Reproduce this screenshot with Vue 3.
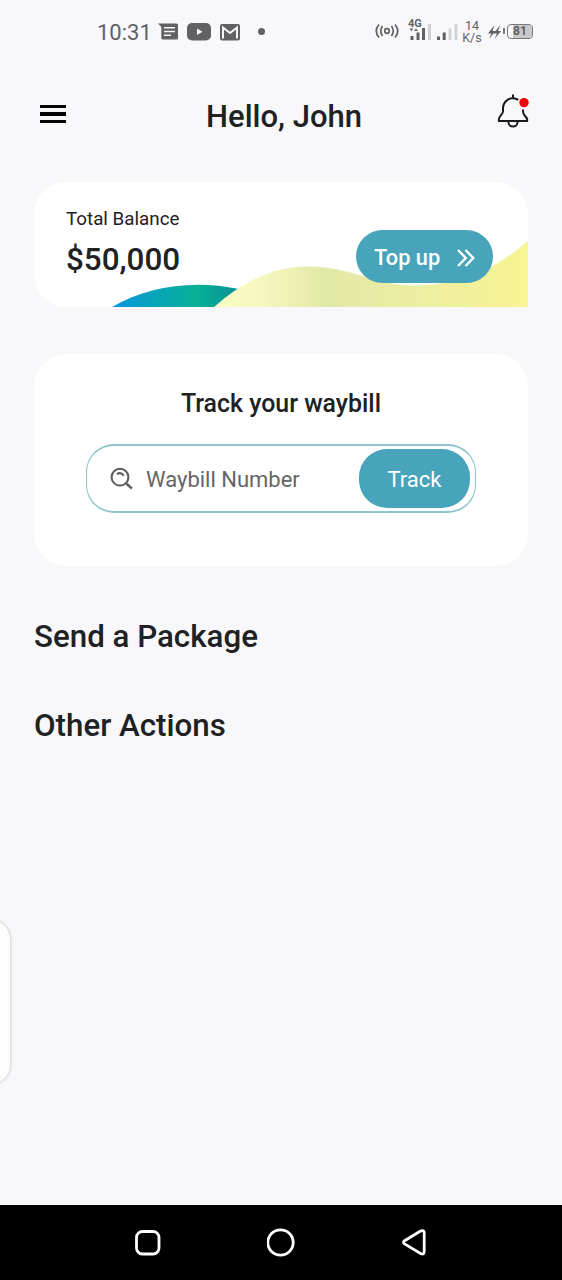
<script setup>
import { ref } from 'vue'

const waybill = ref('')
const battery = 81
</script>

<template>
  <div class="screen">
    <header class="status">
      <span class="clock">10:31</span>
      <svg class="msg" width="20" height="18" viewBox="0 0 20 18">
        <path d="M0 .5H18.500Q20 .5 20 2V15Q20 16.500 18.500 16.500H5Q3.300 16.500 3.300 15V4Z" fill="#616163" />
        <path d="M6 4.700H17M6 8.500H17M6 12.300H13" stroke="#f8f8fa" stroke-width="1.600" />
      </svg>
      <svg class="tube" width="24" height="18" viewBox="0 0 24 18">
        <rect width="24" height="17.500" rx="5" fill="#616163" />
        <path d="M10 5.500L15.500 8.700L10 12Z" fill="#f8f8fa" />
      </svg>
      <svg class="mail" width="20" height="17" viewBox="0 0 20 17">
        <rect width="20" height="16.500" rx="2" fill="#616163" />
        <path d="M3 14.500V3.500L10 9L17 3.500V14.500" fill="none" stroke="#f8f8fa" stroke-width="2" />
      </svg>
      <i class="dot"></i>
      <svg class="hotspot" width="24" height="16" viewBox="0 0 24 16" fill="none" stroke="#616163" stroke-width="1.700">
        <circle cx="12" cy="8" r="2.300" />
        <path d="M7.500 3Q4 8 7.500 13M16.500 3Q20 8 16.500 13M4 1.500Q-1.500 8 4 14.500M20 1.500Q25.500 8 20 14.500" />
      </svg>
      <div class="cell">
        <span class="gen">4G</span>
        <svg width="22" height="22" viewBox="0 0 22 22">
          <path d="M.5 9.500H4.500L2.500 12ZM5 12H9L7 9.500Z" fill="#616163" />
          <path d="M3 17V21M9 13.500V21M14.500 9V21" stroke="#616163" stroke-width="3" />
          <path d="M20.500 5V21" stroke="#d0d0d2" stroke-width="3" />
        </svg>
      </div>
      <svg class="signal" width="21" height="17" viewBox="0 0 21 17">
        <path d="M1.500 12.500V16M7.200 8.500V16" stroke="#616163" stroke-width="3" />
        <path d="M13 4.500V16M19 0V16" stroke="#d0d0d2" stroke-width="2.800" />
      </svg>
      <div class="rate"><span>14</span><span>K/s</span></div>
      <svg class="bolt" width="13" height="14" viewBox="0 0 13 14">
        <path d="M6.500 0L0 8.500H3.500L1 14L7.500 6H4.500ZM12.500 0L5.500 8.500H9L6.500 14L13 6H10Z" fill="#616163" />
      </svg>
      <i class="battery-tip"></i>
      <div class="battery"><b :style="{ width: battery + '%' }"></b><span>{{ battery }}</span></div>
    </header>

    <div class="topbar">
      <button class="menu" aria-label="Menu"><i></i><i></i><i></i></button>
      <h1>Hello, John</h1>
      <button class="bell" aria-label="Notifications">
        <svg width="32" height="34" viewBox="0 0 32 34" fill="none" stroke="#18191b" stroke-width="2" stroke-linejoin="round" stroke-linecap="round">
          <path d="M20.500 5.500C12.500 2 6 7.500 6 14.500V17.500C6 20 1.800 22.500 1.800 25.500V27H30.200V25.500C30.200 23 26 21.500 26 17.500V16.200" />
          <path d="M16 1.300V4" />
          <path d="M11.400 28C11.400 34 20.600 34 20.600 28" />
          <circle cx="27" cy="8.600" r="4.700" fill="#f40408" stroke="none" />
        </svg>
      </button>
    </div>

    <main>
      <section class="balance">
        <svg class="waves" width="494" height="125" viewBox="0 0 494 125">
          <defs>
            <linearGradient id="sea" x1="0" x2="1">
              <stop offset="0" stop-color="#0a97dc" />
              <stop offset=".35" stop-color="#08a5b8" />
              <stop offset=".67" stop-color="#06b194" />
              <stop offset="1" stop-color="#0b9099" />
            </linearGradient>
            <linearGradient id="sand" x1="0" x2="1">
              <stop offset="0" stop-color="#fbfcc5" />
              <stop offset=".14" stop-color="#f6f8c0" />
              <stop offset=".36" stop-color="#e2e8a6" />
              <stop offset=".62" stop-color="#ebeda3" />
              <stop offset="1" stop-color="#f8f493" />
            </linearGradient>
          </defs>
          <path d="M78 125C112 105 158 97 205 107L181 125Z" fill="url(#sea)" />
          <path d="M180 125C214 95 244 84.500 274 84.500C318 84.500 340 103.500 380 103.500C427 103.500 460 88 494 59V125Z" fill="url(#sand)" />
        </svg>
        <div class="amount">
          <p>Total Balance</p>
          <strong>$50,000</strong>
        </div>
        <button class="topup">
          <span>Top up</span>
          <svg width="18" height="18" viewBox="0 0 18 18" fill="none" stroke="#fff" stroke-width="2.400">
            <path d="M1 1L8.800 9L1 17M8.500 1L16.300 9L8.500 17" />
          </svg>
        </button>
      </section>

      <section class="track">
        <h2>Track your waybill</h2>
        <div class="search">
          <svg width="24" height="24" viewBox="0 0 24 24" fill="none" stroke="#5c5c5e" stroke-width="2">
            <circle cx="10" cy="10.200" r="8.400" />
            <path d="M16.300 16.500L21.800 21.500" stroke-width="2.400" />
            <path d="M6.800 7.200Q10.800 4.500 13.800 8.800" />
          </svg>
          <input v-model="waybill" placeholder="Waybill Number" />
          <button>Track</button>
        </div>
      </section>

      <h3>Send a Package</h3>
      <h3>Other Actions</h3>
    </main>

    <aside class="edge-panel"></aside>

    <nav>
      <svg width="26" height="26" viewBox="0 0 26 26"><rect x="1.500" y="1.500" width="22.500" height="22.500" rx="6" /></svg>
      <svg width="28" height="30" viewBox="0 0 28 30"><circle cx="13.500" cy="14.500" r="12.700" /></svg>
      <svg width="26" height="28" viewBox="0 0 26 28"><path d="M3.600 11.700L19.500 2.100Q23.200 .5 23.200 4.100V22.500Q23.200 26.100 19.500 24.500L3.600 14.900Q1.300 13.300 3.600 11.700Z" /></svg>
    </nav>
  </div>
</template>

<style>
body {
  background: #f8f8fa;
}
</style>

<style scoped>
* {
  box-sizing: border-box;
}
.screen {
  position: relative;
  display: flex;
  flex-direction: column;
  width: 562px;
  height: 1280px;
  overflow: hidden;
  background: #f8f8fa;
  color: #202123;
  font-family: Roboto, sans-serif;
}
h1, h2, h3, p {
  margin: 0;
  font-weight: 500;
  white-space: nowrap;
}
button {
  border: 0;
  padding: 0;
  background: none;
  font-family: inherit;
}
svg {
  display: block;
  flex: none;
}
.status {
  display: flex;
  align-items: center;
  height: 64px;
  padding-left: 97px;
  color: #616163;
}
.status > * {
  flex: none;
}
.clock {
  width: 61px;
  font-size: 22px;
}
.tube {
  margin-left: 9px;
}
.mail {
  margin-left: 9px;
}
.dot {
  width: 7px;
  height: 7px;
  margin-left: 18px;
  margin-bottom: 2px;
  border-radius: 50%;
  background: #616163;
}
.hotspot {
  margin-left: 110px;
  margin-bottom: 2px;
}
.cell {
  position: relative;
  margin-left: 10px;
  margin-bottom: 4px;
}
.gen {
  position: absolute;
  top: 0;
  left: -1px;
  font-size: 11px;
  font-weight: 700;
  line-height: 10px;
}
.signal {
  margin-left: 6px;
}
.rate {
  display: flex;
  flex-direction: column;
  align-items: center;
  width: 22px;
  margin-left: 3px;
  font-size: 12.500px;
  line-height: 12.500px;
}
.bolt {
  margin-left: 5px;
}
.battery-tip {
  width: 2px;
  height: 6px;
  margin-left: 2px;
  margin-bottom: 2px;
  background: #77777a;
}
.battery {
  position: relative;
  width: 26px;
  height: 15px;
  margin-left: 2px;
  margin-bottom: 2px;
  overflow: hidden;
  border: 1px solid #77777a;
  border-radius: 4px;
  font-size: 12px;
  font-weight: 700;
  line-height: 13px;
  text-align: center;
}
.battery b {
  position: absolute;
  right: 0;
  top: 0;
  bottom: 0;
  background: #c9c9cb;
}
.battery span {
  position: relative;
}
.topbar {
  display: flex;
  justify-content: space-between;
  align-items: center;
  height: 102px;
  padding: 0 33px 0 40px;
}
.menu {
  display: flex;
  flex-direction: column;
  gap: 4.500px;
  width: 26px;
  margin-bottom: 2px;
}
.menu i {
  height: 3.300px;
  background: #050506;
}
h1 {
  padding: 3px 0 0 5px;
  font-size: 31px;
  line-height: 36px;
}
.bell {
  margin-bottom: 8px;
}
main {
  flex: 1;
  padding: 16px 34px 0;
}
.balance {
  position: relative;
  display: flex;
  justify-content: space-between;
  height: 125px;
  padding: 26px 35px 0 32px;
  border-radius: 32px;
  background: #fff;
}
.waves {
  position: absolute;
  inset: 0;
}
.amount {
  position: relative;
}
.amount p {
  font-size: 18.800px;
  font-weight: 400;
  line-height: 23px;
}
.amount strong {
  display: block;
  margin-top: 10px;
  font-size: 31.400px;
  font-weight: 500;
  line-height: 38px;
}
.topup {
  position: relative;
  display: flex;
  justify-content: space-between;
  align-items: center;
  width: 137px;
  height: 53px;
  margin-top: 22px;
  padding: 2px 18px 0;
  border-radius: 27px;
  background: #47a4bb;
  color: #fff;
  font-size: 21.800px;
  font-weight: 500;
}
.track {
  display: flex;
  flex-direction: column;
  align-items: center;
  height: 212px;
  margin-top: 47px;
  padding-top: 35px;
  border-radius: 32px;
  background: #fff;
}
h2 {
  font-size: 24.900px;
  line-height: 30px;
}
.search {
  display: flex;
  align-items: center;
  width: 390px;
  height: 69px;
  margin-top: 25px;
  padding: 0 5px 0 23px;
  border: solid #8fc5cc;
  border-width: 2px 1px;
  border-radius: 28px;
}
.search input {
  flex: 1;
  min-width: 0;
  margin-left: 12px;
  padding: 2px 0 0;
  border: 0;
  outline: 0;
  background: none;
  font-family: inherit;
  font-size: 22px;
}
.search input::placeholder {
  color: #656567;
  opacity: 1;
}
.search button {
  width: 111px;
  height: 59px;
  padding-top: 2px;
  border-radius: 28px;
  background: #47a4bb;
  color: #fff;
  font-size: 22px;
}
h3 {
  font-size: 31.300px;
  line-height: 40px;
}
.track + h3 {
  margin: 51px 0 49px;
}
.edge-panel {
  position: absolute;
  left: -30px;
  top: 919px;
  width: 41px;
  height: 166px;
  border: 1px solid #dfdfe1;
  border-radius: 22px;
  background: #fdfdfe;
  box-shadow: 0 0 3px #d4d4d6;
}
nav {
  display: flex;
  align-items: center;
  justify-content: space-between;
  height: 75px;
  padding: 0 135px;
  background: #000;
}
nav svg {
  fill: none;
  stroke: #fff;
  stroke-width: 2.800;
}
</style>
